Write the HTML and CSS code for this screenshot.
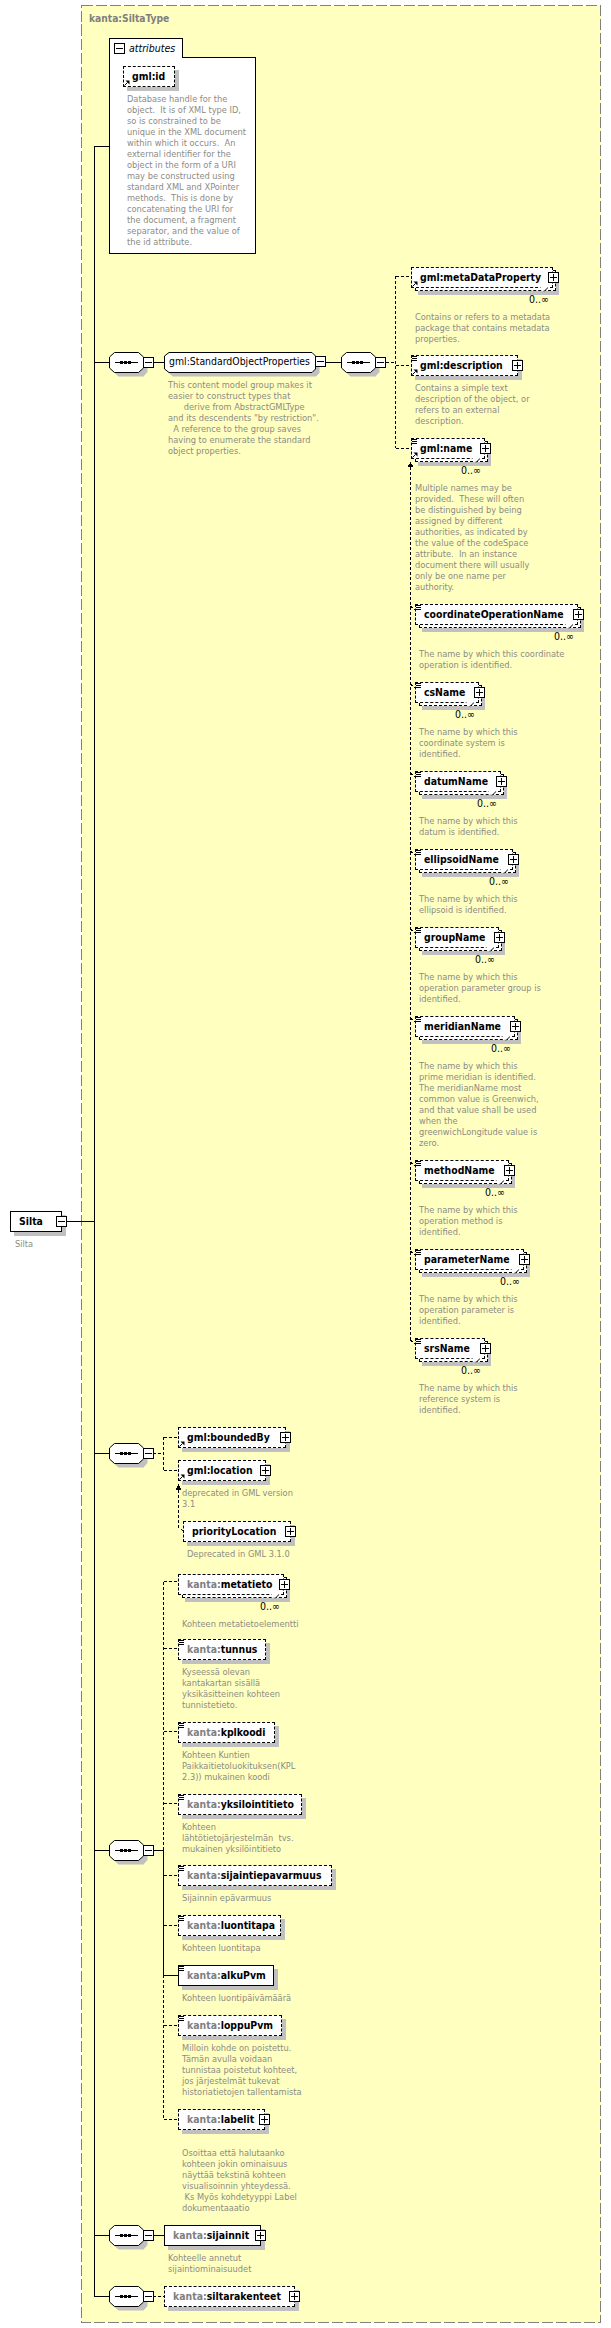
FILE: index.html
```html
<!DOCTYPE html>
<html lang="fi">
<head>
<meta charset="utf-8">
<title>Silta</title>
<link rel="stylesheet" href="styles.css">
</head>
<body>
<svg class="defs" width="0" height="0" aria-hidden="true">
  <symbol id="seq" viewBox="0 0 39 25">
    <polygon class="sh" points="9.5,4.5 34.5,4.5 38.5,9 38.5,20 34.5,24.5 9.5,24.5 4.5,20 4.5,9"/>
    <polygon class="oct" points="5.5,0.5 29.5,0.5 34.5,5 34.5,16 29.5,20.5 5.5,20.5 0.5,16 0.5,5"/>
    <path class="w" d="M6 10.5H29"/>
    <path class="w3" d="M11 10.5H14M15 10.5H18M19 10.5H22"/>
  </symbol>
  <symbol id="ref" viewBox="0 0 6 6">
    <path class="w" d="M0.5 5.5L3.5 2.5"/>
    <polygon class="fk" points="1.5,0.5 5.5,0.5 5.5,4.5"/>
  </symbol>
  <symbol id="mix" viewBox="0 0 6 6">
    <path class="w" d="M0 0.5H5M0 2.5H5M0 4.5H5"/>
  </symbol>
  <symbol id="rep" viewBox="0 0 8 5">
    <polygon class="wh" points="0,0 8,0 4,4.5"/>
    <path class="w" d="M4 4.5L7.5 1"/>
  </symbol>
</svg>
<main class="canvas">
  <svg class="wires" width="611" height="2328" aria-hidden="true">
    <rect class="panel" x="81.5" y="5.5" width="519" height="2317"/>
    <path class="w" d="M94.5 146V2296.5H109M109 146.5H94M67 1221.5H94M94 362.5H109M94 1453.5H109M94 1850.5H109M94 2235.5H109"/>
    <path class="w" d="M153 362.5H164M326 362.5H341"/>
    <path class="d" d="M386 362.5H395.5M395.5 276V448M395.5 276.5H411M395.5 365.5H411M395.5 448.5H411"/>
    <path class="d" d="M410.5 467V1341M410.5 606L415 610M410.5 684L415 688M410.5 773L415 777M410.5 851L415 855M410.5 929L415 933M410.5 1018L415 1022M410.5 1162L415 1166M410.5 1251L415 1255M410.5 1340L415 1344"/>
    <polygon class="fk" points="410.5,462 413.5,467 407.5,467"/>
    <path class="d" d="M153 1453.5H163.5M163.5 1437V1471M163.5 1437.5H178M163.5 1470.5H178M178.5 1490V1527L183 1531"/>
    <polygon class="fk" points="178.5,1484 181.5,1490 175.5,1490"/>
    <path class="d" d="M163.5 1581.5V1850M163.5 1581.5H178M163.5 1648.5H178M163.5 1731.5H178M163.5 1803.5H178M163.5 1875.5H178M163.5 1925.5H178M163.5 1975V2119.5H178M163.5 2025.5H178"/>
    <path class="w" d="M153 1850.5H163.5V1975.5H178M153 2235.5H164"/>
    <path class="d" d="M153 2296.5H164"/>
  </svg>

  <h1 class="title">kanta:SiltaType</h1>

  <section class="attrs">
    <div class="attrs-tab"><span class="btn minus"></span><em>attributes</em></div>
    <div class="attrs-body"></div>
  </section>

  <div class="item i-id">
    <div class="el dash"><b>gml:id</b><svg class="ic-ref"><use href="#ref"/></svg></div>
    <p class="doc">Database handle for the<br>object.&nbsp; It is of XML type ID,<br>so is constrained to be<br>unique in the XML document<br>within which it occurs.&nbsp; An<br>external identifier for the<br>object in the form of a URI<br>may be constructed using<br>standard XML and XPointer<br>methods.&nbsp; This is done by<br>concatenating the URI for<br>the document, a fragment<br>separator, and the value of<br>the id attribute.</p>
  </div>

  <div class="item i-silta">
    <div class="el solid"><b>Silta</b><span class="btn minus"></span></div>
    <p class="doc silta-doc">Silta</p>
  </div>

  <svg class="seq s1"><use href="#seq"/></svg><span class="btn minus b1"></span>
  <div class="item i-group">
    <svg class="chamfer" width="156" height="25"><polygon class="sh" points="9,4.5 152,4.5 155.5,8 155.5,21 152,24.5 9,24.5 4.5,21 4.5,8"/><polygon class="oct" points="5,0.5 148,0.5 151.5,4 151.5,17 148,20.5 5,20.5 0.5,17 0.5,4"/></svg>
    <div class="el plain"><span>gml:StandardObjectProperties</span><span class="btn minus"></span></div>
    <p class="doc">This content model group makes it<br>easier to construct types that<br>&nbsp; &nbsp; &nbsp; derive from AbstractGMLType<br>and its descendents "by restriction".<br>&nbsp; A reference to the group saves<br>having to enumerate the standard<br>object properties.</p>
  </div>
  <svg class="seq s2"><use href="#seq"/></svg><span class="btn minus b2"></span>

  <div class="item i-meta">
    <div class="el dash multi"><b>gml:metaDataProperty</b><svg class="ic-ref"><use href="#ref"/></svg><span class="btn plus"></span><svg class="ic-rep"><use href="#rep"/></svg></div>
    <div class="occ">0..∞</div>
    <p class="doc">Contains or refers to a metadata<br>package that contains metadata<br>properties.</p>
  </div>
  <div class="item i-desc">
    <div class="el dash"><svg class="ic-mix"><use href="#mix"/></svg><b>gml:description</b><svg class="ic-ref"><use href="#ref"/></svg><span class="btn plus"></span></div>
    <p class="doc">Contains a simple text<br>description of the object, or<br>refers to an external<br>description.</p>
  </div>
  <div class="item i-name">
    <div class="el dash multi"><svg class="ic-mix"><use href="#mix"/></svg><b>gml:name</b><svg class="ic-ref"><use href="#ref"/></svg><span class="btn plus"></span><svg class="ic-rep"><use href="#rep"/></svg></div>
    <div class="occ">0..∞</div>
    <p class="doc">Multiple names may be<br>provided.&nbsp; These will often<br>be distinguished by being<br>assigned by different<br>authorities, as indicated by<br>the value of the codeSpace<br>attribute.&nbsp; In an instance<br>document there will usually<br>only be one name per<br>authority.</p>
  </div>
  <div class="item i-coord">
    <div class="el dash multi"><svg class="ic-mix"><use href="#mix"/></svg><b>coordinateOperationName</b><span class="btn plus"></span><svg class="ic-rep"><use href="#rep"/></svg></div>
    <div class="occ">0..∞</div>
    <p class="doc">The name by which this coordinate<br>operation is identified.</p>
  </div>
  <div class="item i-cs">
    <div class="el dash multi"><svg class="ic-mix"><use href="#mix"/></svg><b>csName</b><span class="btn plus"></span><svg class="ic-rep"><use href="#rep"/></svg></div>
    <div class="occ">0..∞</div>
    <p class="doc">The name by which this<br>coordinate system is<br>identified.</p>
  </div>
  <div class="item i-datum">
    <div class="el dash multi"><svg class="ic-mix"><use href="#mix"/></svg><b>datumName</b><span class="btn plus"></span><svg class="ic-rep"><use href="#rep"/></svg></div>
    <div class="occ">0..∞</div>
    <p class="doc">The name by which this<br>datum is identified.</p>
  </div>
  <div class="item i-ell">
    <div class="el dash multi"><svg class="ic-mix"><use href="#mix"/></svg><b>ellipsoidName</b><span class="btn plus"></span><svg class="ic-rep"><use href="#rep"/></svg></div>
    <div class="occ">0..∞</div>
    <p class="doc">The name by which this<br>ellipsoid is identified.</p>
  </div>
  <div class="item i-grp">
    <div class="el dash multi"><svg class="ic-mix"><use href="#mix"/></svg><b>groupName</b><span class="btn plus"></span><svg class="ic-rep"><use href="#rep"/></svg></div>
    <div class="occ">0..∞</div>
    <p class="doc">The name by which this<br>operation parameter group is<br>identified.</p>
  </div>
  <div class="item i-mer">
    <div class="el dash multi"><svg class="ic-mix"><use href="#mix"/></svg><b>meridianName</b><span class="btn plus"></span><svg class="ic-rep"><use href="#rep"/></svg></div>
    <div class="occ">0..∞</div>
    <p class="doc">The name by which this<br>prime meridian is identified.<br>The meridianName most<br>common value is Greenwich,<br>and that value shall be used<br>when the<br>greenwichLongitude value is<br>zero.</p>
  </div>
  <div class="item i-met">
    <div class="el dash multi"><svg class="ic-mix"><use href="#mix"/></svg><b>methodName</b><span class="btn plus"></span><svg class="ic-rep"><use href="#rep"/></svg></div>
    <div class="occ">0..∞</div>
    <p class="doc">The name by which this<br>operation method is<br>identified.</p>
  </div>
  <div class="item i-par">
    <div class="el dash multi"><svg class="ic-mix"><use href="#mix"/></svg><b>parameterName</b><span class="btn plus"></span><svg class="ic-rep"><use href="#rep"/></svg></div>
    <div class="occ">0..∞</div>
    <p class="doc">The name by which this<br>operation parameter is<br>identified.</p>
  </div>
  <div class="item i-srs">
    <div class="el dash multi"><svg class="ic-mix"><use href="#mix"/></svg><b>srsName</b><span class="btn plus"></span><svg class="ic-rep"><use href="#rep"/></svg></div>
    <div class="occ">0..∞</div>
    <p class="doc">The name by which this<br>reference system is<br>identified.</p>
  </div>

  <svg class="seq s3"><use href="#seq"/></svg><span class="btn minus b3"></span>
  <div class="item i-bound">
    <div class="el dash"><b>gml:boundedBy</b><svg class="ic-ref"><use href="#ref"/></svg><span class="btn plus"></span></div>
  </div>
  <div class="item i-loc">
    <div class="el dash"><b>gml:location</b><svg class="ic-ref"><use href="#ref"/></svg><span class="btn plus"></span></div>
    <p class="doc">deprecated in GML version<br>3.1</p>
  </div>
  <div class="item i-prio">
    <div class="el dash"><b>priorityLocation</b><span class="btn plus"></span></div>
    <p class="doc">Deprecated in GML 3.1.0</p>
  </div>

  <svg class="seq s4"><use href="#seq"/></svg><span class="btn minus b4"></span>
  <div class="item i-mt">
    <div class="el dash multi"><b><i>kanta:</i>metatieto</b><span class="btn plus"></span><svg class="ic-rep"><use href="#rep"/></svg></div>
    <div class="occ">0..∞</div>
    <p class="doc">Kohteen metatietoelementti</p>
  </div>
  <div class="item i-tun">
    <div class="el dash"><svg class="ic-mix"><use href="#mix"/></svg><b><i>kanta:</i>tunnus</b></div>
    <p class="doc">Kyseessä olevan<br>kantakartan sisällä<br>yksikäsitteinen kohteen<br>tunnistetieto.</p>
  </div>
  <div class="item i-kpl">
    <div class="el dash"><svg class="ic-mix"><use href="#mix"/></svg><b><i>kanta:</i>kplkoodi</b></div>
    <p class="doc">Kohteen Kuntien<br>Paikkaitietoluokituksen(KPL<br>2.3)) mukainen koodi</p>
  </div>
  <div class="item i-yks">
    <div class="el dash"><svg class="ic-mix"><use href="#mix"/></svg><b><i>kanta:</i>yksilointitieto</b></div>
    <p class="doc">Kohteen<br>lähtötietojärjestelmän&nbsp; tvs.<br>mukainen yksilöintitieto</p>
  </div>
  <div class="item i-sij">
    <div class="el dash"><svg class="ic-mix"><use href="#mix"/></svg><b><i>kanta:</i>sijaintiepavarmuus</b></div>
    <p class="doc">Sijainnin epävarmuus</p>
  </div>
  <div class="item i-luo">
    <div class="el dash"><svg class="ic-mix"><use href="#mix"/></svg><b><i>kanta:</i>luontitapa</b></div>
    <p class="doc">Kohteen luontitapa</p>
  </div>
  <div class="item i-alku">
    <div class="el solid"><svg class="ic-mix"><use href="#mix"/></svg><b><i>kanta:</i>alkuPvm</b></div>
    <p class="doc">Kohteen luontipäivämäärä</p>
  </div>
  <div class="item i-lop">
    <div class="el dash"><svg class="ic-mix"><use href="#mix"/></svg><b><i>kanta:</i>loppuPvm</b></div>
    <p class="doc">Milloin kohde on poistettu.<br>Tämän avulla voidaan<br>tunnistaa poistetut kohteet,<br>jos järjestelmät tukevat<br>historiatietojen tallentamista</p>
  </div>
  <div class="item i-lab">
    <div class="el dash"><b><i>kanta:</i>labelit</b><span class="btn plus"></span></div>
    <p class="doc doc-far">Osoittaa että halutaanko<br>kohteen jokin ominaisuus<br>näyttää tekstinä kohteen<br>visualisoinnin yhteydessä.<br>&nbsp;Ks Myös kohdetyyppi Label<br>dokumentaaatio</p>
  </div>

  <svg class="seq s5"><use href="#seq"/></svg><span class="btn minus b5"></span>
  <div class="item i-sijn">
    <div class="el solid"><b><i>kanta:</i>sijainnit</b><span class="btn plus"></span></div>
    <p class="doc">Kohteelle annetut<br>sijaintiominaisuudet</p>
  </div>
  <svg class="seq s6"><use href="#seq"/></svg><span class="btn minus b6"></span>
  <div class="item i-silt">
    <div class="el dash"><b><i>kanta:</i>siltarakenteet</b><span class="btn plus"></span></div>
  </div>
</main>
</body>
</html>
```
FILE: styles.css
```css
* { box-sizing: border-box; }
html, body { margin: 0; padding: 0; background: #fff; }
body {
  font-family: "DejaVu Sans", "Noto Sans", sans-serif;
  font-stretch: condensed;
  font-size: 10px;
  color: #000;
}
.defs { position: absolute; }
.canvas { position: relative; width: 611px; height: 2328px; overflow: hidden; }
.wires { position: absolute; left: 0; top: 0; shape-rendering: crispEdges; }
.panel { fill: #ffffc0; stroke: #808080; stroke-width: 1; stroke-dasharray: 11 3; }
.w, .w3 { fill: none; stroke: #000; stroke-width: 1; }
.w3 { stroke-width: 3; }
.d { fill: none; stroke: #000; stroke-width: 1; stroke-dasharray: 3 2; }
.fk { fill: #000; }
.wh { fill: #fff; }
.sh { fill: #c0c0c0; }
.oct { fill: #fff; stroke: #000; stroke-width: 1; }

.title {
  position: absolute; left: 89px; top: 12px; margin: 0;
  font-size: 10.2px; line-height: 14px; font-weight: bold; color: #808080;
}

.attrs { position: absolute; left: 109px; top: 38px; width: 147px; height: 216px; }
.attrs-tab {
  position: absolute; left: 0; top: 0; width: 74px; height: 20px;
  border: 1px solid #000; border-bottom: 0; background: #fff; z-index: 1;
}
.attrs-tab em { position: absolute; left: 19px; top: 2px; font-size: 10.5px; line-height: 14px; }
.attrs-tab .btn { left: 4px; top: 4px; right: auto; }
.attrs-body {
  position: absolute; left: 0; top: 19px; width: 147px; height: 197px;
  border: 1px solid #000; background: #fff;
}

.item { position: absolute; isolation: isolate; }
.el {
  position: relative; height: 21px; width: 100%;
  padding-left: 8px; line-height: 19px; white-space: nowrap;
  background: #fff;
}
.el b { font-size: 10.4px; font-weight: bold; }
.el b i { font-style: normal; color: #808080; }
.solid { border: 1px solid #000; box-shadow: 4px 4px 0 #c0c0c0; }
.dash { border: 1px dashed #000; box-shadow: 4px 4px 0 #c0c0c0; }
.plain { background: transparent; padding-left: 5px; font-size: 10.4px; }
.multi { box-shadow: none; }
.multi::before {
  content: ""; position: absolute; left: 3px; top: 2px; right: -4px; bottom: -4px;
  border: 1px dashed #000; background: #fff; box-shadow: 3px 4px 0 #c0c0c0; z-index: -1;
}

.btn {
  position: absolute; right: -6px; top: 4px; width: 11px; height: 11px;
  border: 1px solid #000; background: #fff;
}
.btn::before {
  content: ""; position: absolute; left: 1px; right: 1px; top: 4px; height: 1px; background: #000;
}
.plus::after {
  content: ""; position: absolute; top: 1px; bottom: 1px; left: 4px; width: 1px; background: #000;
}
.multi .btn { right: -7px; }

.ic-ref { position: absolute; left: 0; bottom: 0; width: 6px; height: 6px; }
.ic-mix { position: absolute; left: 0; top: 0; width: 6px; height: 6px; background: #fff; }
.ic-rep { position: absolute; right: 4px; bottom: -5px; width: 8px; height: 5px; }

.occ { margin-top: 6px; height: 11px; line-height: 11px; font-size: 10.5px; text-align: right; white-space: nowrap; padding-right: 4px; }
.doc {
  margin: 6px 0 0; padding-left: 4px; font-size: 9.2px; line-height: 11px;
  color: #8c8c84; white-space: nowrap;
}
.doc-far { margin-top: 17px; }
.silta-doc { padding-left: 5px; margin-top: 6px; }

.seq { position: absolute; left: 109px; width: 39px; height: 25px; }
.chamfer { position: absolute; left: 0; top: 0; z-index: -1; }
.s1 { top: 352px; }
.s2 { left: 341px; top: 352px; }
.s3 { top: 1443px; }
.s4 { top: 1840px; }
.s5 { top: 2225px; }
.s6 { top: 2286px; }
.b1, .b2, .b3, .b4, .b5, .b6 { left: 143px; right: auto; }
.b1 { top: 357px; }
.b2 { left: 375px; top: 357px; }
.b3 { top: 1448px; }
.b4 { top: 1845px; }
.b5 { top: 2230px; }
.b6 { top: 2291px; }

.i-group { left: 164px; top: 352px; width: 152px; }
.i-group .btn { right: -10px; }
.i-id { left: 123px; top: 66px; width: 52px; }
.i-silta { left: 10px; top: 1211px; width: 52px; }
.i-silta .btn { right: -6px; }
.i-meta { left: 411px; top: 267px; width: 142px; }
.i-desc { left: 411px; top: 355px; width: 107px; }
.i-name { left: 411px; top: 438px; width: 74px; }
.i-coord { left: 415px; top: 604px; width: 163px; }
.i-cs { left: 415px; top: 682px; width: 64px; }
.i-datum { left: 415px; top: 771px; width: 86px; }
.i-ell { left: 415px; top: 849px; width: 98px; }
.i-grp { left: 415px; top: 927px; width: 84px; }
.i-mer { left: 415px; top: 1016px; width: 100px; }
.i-met { left: 415px; top: 1160px; width: 94px; }
.i-par { left: 415px; top: 1249px; width: 109px; }
.i-srs { left: 415px; top: 1338px; width: 70px; }
.i-bound { left: 178px; top: 1427px; width: 108px; }
.i-loc { left: 178px; top: 1460px; width: 88px; }
.i-prio { left: 183px; top: 1521px; width: 108px; }
.i-mt { left: 178px; top: 1574px; width: 106px; }
.i-tun { left: 178px; top: 1639px; width: 88px; }
.i-kpl { left: 178px; top: 1722px; width: 97px; }
.i-yks { left: 178px; top: 1794px; width: 124px; }
.i-sij { left: 178px; top: 1865px; width: 154px; }
.i-luo { left: 178px; top: 1915px; width: 103px; }
.i-alku { left: 178px; top: 1965px; width: 96px; }
.i-lop { left: 178px; top: 2015px; width: 104px; }
.i-lab { left: 178px; top: 2109px; width: 87px; }
.i-sijn { left: 164px; top: 2225px; width: 97px; }
.i-silt { left: 164px; top: 2286px; width: 131px; }
```
